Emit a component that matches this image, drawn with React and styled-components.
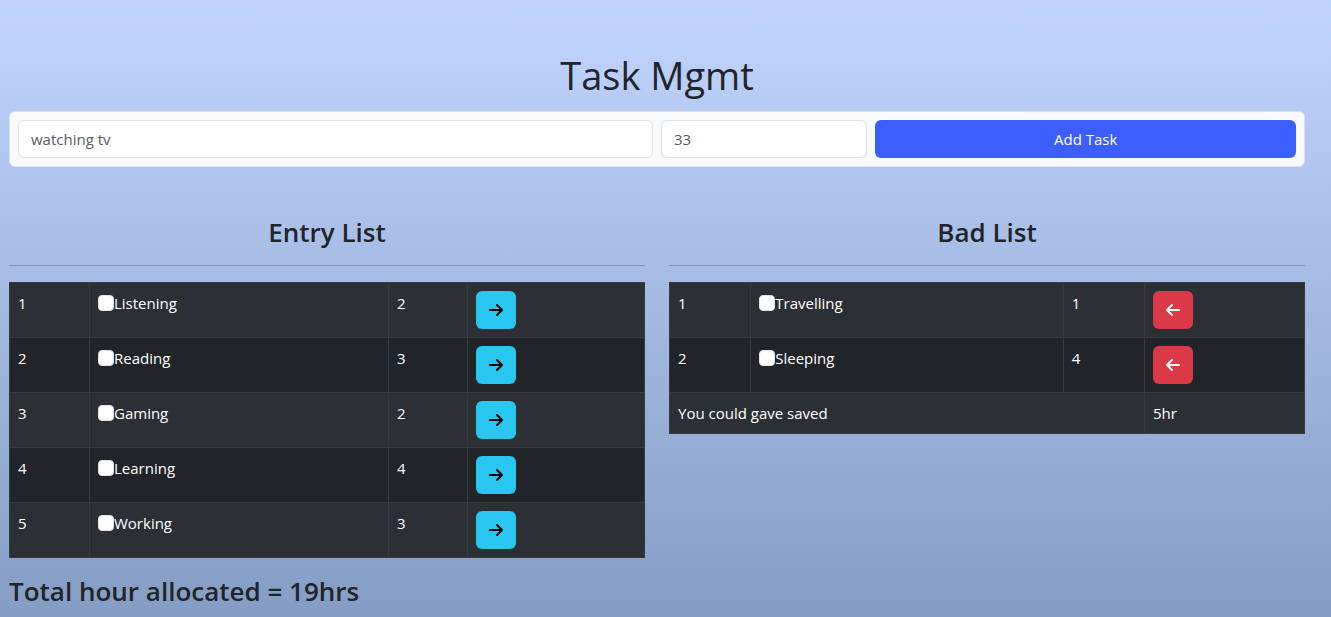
import React, { useState } from "react";
import styled, { createGlobalStyle } from "styled-components";
import { FaArrowLeft, FaArrowRight } from "react-icons/fa6";

const GlobalStyle = createGlobalStyle`
  *, *::before, *::after { box-sizing: border-box; }
  body {
    margin: 0;
    min-height: 100vh;
    background: linear-gradient(#c1d5ff, #859dc4) no-repeat;
    color: #212529;
    font-family: "Open Sans", "Noto Sans", sans-serif;
    font-size: 15px;
    line-height: 24px;
  }
`;

const Page = styled.main`
  padding: 51px 26px 8px 9px;
`;

const Title = styled.h1`
  margin: 0 0 12px;
  font-size: 38px;
  line-height: 48px;
  font-weight: 400;
  text-align: center;
`;

const TaskForm = styled.form`
  display: grid;
  grid-template-columns: repeat(12, minmax(0, 1fr));
  gap: 8px;
  padding: 8px;
  border: 1px solid #dee2e6;
  border-radius: 6px;
  background: #f8f9fa;
`;

const Field = styled.input`
  grid-column: span ${(p) => p.$span};
  width: 100%;
  height: 38px;
  padding: 6px 12px;
  border: 1px solid #dee2e6;
  border-radius: 6px;
  background: #fff;
  color: #212529;
  font: inherit;
  &::placeholder { color: #595c5f; opacity: 1; }
`;

const SubmitButton = styled.button`
  grid-column: span 4;
  height: 38px;
  border: 0;
  border-radius: 6px;
  background: #3d5eff;
  color: #fff;
  font: inherit;
  cursor: pointer;
`;

const Lists = styled.div`
  display: grid;
  grid-template-columns: repeat(2, minmax(0, 1fr));
  gap: 24px;
  align-items: start;
  margin-top: 48px;
`;

const Heading = styled.h3`
  margin: 0;
  font-size: 26px;
  line-height: 34px;
  font-weight: 600;
  text-align: ${(p) => p.$align || "left"};
`;

const Divider = styled.hr`
  margin: 16px 0;
  border: 0;
  border-top: 1px solid #8093bf;
`;

const Table = styled.table`
  width: 100%;
  margin-bottom: 16px;
  table-layout: fixed;
  border-collapse: collapse;
  color: #fff;
`;

const Col = styled.col`
  width: ${(p) => p.$width};
`;

const Row = styled.tr`
  background: #212529;
  &:nth-child(odd) { background: #2c3034; }
`;

const Cell = styled.td`
  padding: 8px;
  border: 1px solid #373b3e;
  vertical-align: top;
`;

const CheckLabel = styled.label`
  display: flex;
  align-items: center;
`;

const Checkbox = styled.input`
  appearance: none;
  flex: none;
  width: 16px;
  height: 16px;
  margin: 0;
  border: 1px solid #dee2e6;
  border-radius: 4px;
  background: #fff;
  &:checked { background: #0d6efd; }
`;

const MoveButton = styled.button`
  display: flex;
  align-items: center;
  justify-content: center;
  width: 40px;
  height: 38px;
  padding: 0;
  border: 0;
  border-radius: 6px;
  background: ${(p) => (p.$danger ? "#dc3948" : "#29c7f0")};
  color: ${(p) => (p.$danger ? "#fff" : "#000")};
  font-size: 16px;
  cursor: pointer;
`;

const initialTasks = [
  { id: 1, name: "Listening", hours: 2, bad: false },
  { id: 2, name: "Reading", hours: 3, bad: false },
  { id: 3, name: "Gaming", hours: 2, bad: false },
  { id: 4, name: "Learning", hours: 4, bad: false },
  { id: 5, name: "Working", hours: 3, bad: false },
  { id: 6, name: "Travelling", hours: 1, bad: true },
  { id: 7, name: "Sleeping", hours: 4, bad: true },
];

const sum = (tasks) => tasks.reduce((total, t) => total + t.hours, 0);

function TaskTable({ tasks, widths, danger, onMove, children }) {
  return (
    <Table>
      <colgroup>
        {widths.map((w, i) => <Col key={i} $width={w} />)}
      </colgroup>
      <tbody>
        {tasks.map((task, i) => (
          <Row key={task.id}>
            <Cell>{i + 1}</Cell>
            <Cell>
              <CheckLabel>
                <Checkbox type="checkbox" />
                {task.name}
              </CheckLabel>
            </Cell>
            <Cell>{task.hours}</Cell>
            <Cell>
              <MoveButton
                type="button"
                $danger={danger}
                aria-label={"Move " + task.name}
                onClick={() => onMove(task.id)}
              >
                {danger ? <FaArrowLeft /> : <FaArrowRight />}
              </MoveButton>
            </Cell>
          </Row>
        ))}
        {children}
      </tbody>
    </Table>
  );
}

export default function App() {
  const [tasks, setTasks] = useState(initialTasks);
  const entries = tasks.filter((t) => !t.bad);
  const badTasks = tasks.filter((t) => t.bad);

  const move = (id) =>
    setTasks(tasks.map((t) => (t.id === id ? { ...t, bad: !t.bad } : t)));

  const addTask = (e) => {
    e.preventDefault();
    const data = new FormData(e.currentTarget);
    const name = data.get("task");
    const hours = Number(data.get("hours"));
    if (!name || !hours) return;
    setTasks([...tasks, { id: Date.now(), name, hours, bad: false }]);
    e.currentTarget.reset();
  };

  return (
    <>
      <GlobalStyle />
      <Page>
        <Title>Task Mgmt</Title>
        <TaskForm onSubmit={addTask}>
          <Field $span={6} name="task" placeholder="watching tv" aria-label="Task" />
          <Field $span={2} name="hours" type="number" placeholder="33" aria-label="Hours" />
          <SubmitButton type="submit">Add Task</SubmitButton>
        </TaskForm>
        <Lists>
          <section>
            <Heading $align="center">Entry List</Heading>
            <Divider />
            <TaskTable
              tasks={entries}
              widths={["12.6%", "47.1%", "12.4%", "27.9%"]}
              onMove={move}
            />
            <Heading>Total hour allocated = {sum(tasks)}hrs</Heading>
          </section>
          <section>
            <Heading $align="center">Bad List</Heading>
            <Divider />
            <TaskTable
              tasks={badTasks}
              widths={["12.8%", "49.2%", "12.8%", "25.2%"]}
              danger
              onMove={move}
            >
              <Row>
                <Cell colSpan={3}>You could gave saved</Cell>
                <Cell>{sum(badTasks)}hr</Cell>
              </Row>
            </TaskTable>
          </section>
        </Lists>
      </Page>
    </>
  );
}
